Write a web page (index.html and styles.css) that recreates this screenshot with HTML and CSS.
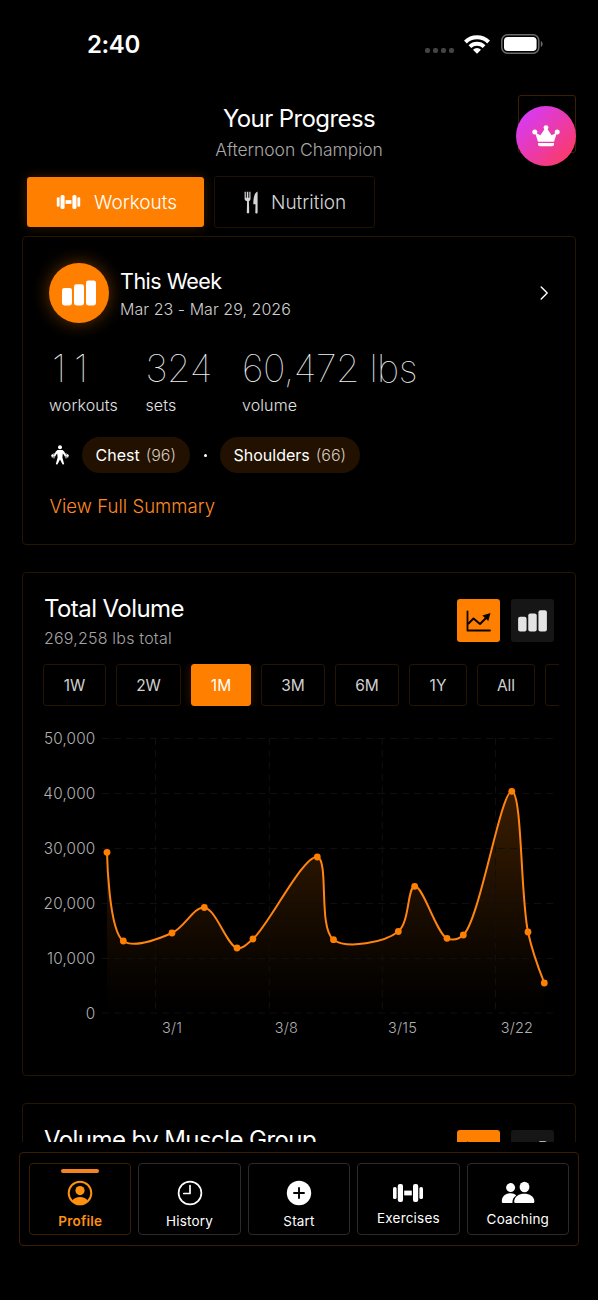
FILE: index.html
```html
<!DOCTYPE html>
<html lang='en'>
<head>
    <meta charset='UTF-8'>
    <title>Your Progress</title>

    <link rel="stylesheet" href="styles.css">
</head>
<body>

<!-- shared icons -->
<svg class='sprite' aria-hidden='true'>
    <symbol id='dumbbell' viewBox='0 0 32 20'>
        <rect x='1' y='4' width='3.6' height='12' rx='1.6'/>
        <rect x='5.8' y='1' width='5.2' height='18' rx='2'/>
        <rect x='12.2' y='7.6' width='7.6' height='4.8'/>
        <rect x='21' y='1' width='5.2' height='18' rx='2'/>
        <rect x='27.4' y='4' width='3.6' height='12' rx='1.6'/>
    </symbol>
    <symbol id='bars' viewBox='0 0 34 26'>
        <rect x='0' y='8' width='10' height='17.5' rx='2.4'/>
        <rect x='12' y='4.2' width='10' height='21.3' rx='2.4'/>
        <rect x='24' y='0.4' width='10' height='25.1' rx='2.4'/>
    </symbol>
    <symbol id='trend' viewBox='0 0 26 24'>
        <path d='M1.500 2.500v19h22.500' fill='none' stroke='currentColor' stroke-width='1.800' stroke-linecap='round' stroke-linejoin='round'/>
        <path d='M2 15l5.500-5.500 6.500 5.500 7-7' fill='none' stroke='currentColor' stroke-width='2' stroke-linejoin='round'/>
        <path d='M24.500 4l-2.200 8-6-5.600z'/>
    </symbol>
</svg>

<div class='screen'>
    <div class='status-bar'>
        <span class='clock'>2:40</span>
        <div class='status-icons'>
            <span class='signal'><i></i><i></i><i></i><i></i></span>
            <svg class='wifi' viewBox='0 0 26 19'>
                <g fill='none' stroke='currentColor' stroke-width='3.900'>
                    <path d='M1.400 7a16.600 16.600 0 0 1 23.200 0'/>
                    <path d='M5.900 11.700a10.200 10.200 0 0 1 14.200 0'/>
                </g>
                <path d='M13 18.800l-4-4.100a5.800 5.800 0 0 1 8 0z'/>
            </svg>
            <svg class='battery' viewBox='0 0 42 20'>
                <rect x='0.8' y='0.8' width='37' height='18.400' rx='5.600' fill='none' stroke='#6a6a6a' stroke-width='1.500'/>
                <rect x='3' y='3' width='32.600' height='14' rx='3.800'/>
                <path d='M39.800 7c2.400 1 2.400 5 0 6z' fill='#6a6a6a'/>
            </svg>
        </div>
    </div>

    <main class='content'>
        <header class='header'>
            <h1>Your Progress</h1>
            <p>Afternoon Champion</p>
            <div class='premium'>
                <a href='#' class='crown'>
                    <svg viewBox='0 0 28 22'>
                        <circle cx='14' cy='2.600' r='2.400'/>
                        <circle cx='2.800' cy='7' r='2.500'/>
                        <circle cx='25.200' cy='7' r='2.500'/>
                        <path d='M3 7.500l5.400 2.700L12.600 4h2.800l4.200 6.200L25 7.500l-3 9.300H6z'/>
                        <path d='M6 18h16v1.300c0 1.200-.8 2-2 2H8c-1.200 0-2-.8-2-2z'/>
                    </svg>
                </a>
            </div>
        </header>

        <nav class='tabs'>
            <a href='#' class='tab tab-active'>
                <svg class='tab-dumbbell'><use href='#dumbbell'/></svg>
                <span>Workouts</span>
            </a>
            <a href='#' class='tab tab-nutrition'>
                <svg class='tab-fork' viewBox='0 0 15 23'>
                    <path d='M.6.8h1.2v6h1V.8h1.500v6h1V.8h1.200v7c0 1.300-.6 2-1.600 2.400l.3 11c0 1.600-2.400 1.600-2.400 0l.3-11C1.200 9.800.6 9.100.6 7.800z'/>
                    <path d='M13.600.6v20.800c0 1.400-2.300 1.400-2.300 0l.2-8.200H9.300C9.200 7 10.400 1.600 13.600.6z'/>
                </svg>
                <span>Nutrition</span>
            </a>
        </nav>

        <section class='card week'>
            <div class='week-head'>
                <div class='week-badge'><svg><use href='#bars'/></svg></div>
                <div class='week-title'>
                    <h2>This Week</h2>
                    <p>Mar 23 - Mar 29, 2026</p>
                </div>
                <svg class='chevron' viewBox='0 0 9 14'><path d='M1.200 1l6 6-6 6' fill='none' stroke='currentColor' stroke-width='1.400' stroke-linecap='round' stroke-linejoin='round'/></svg>
            </div>

            <div class='stats'>
                <div class='stat stat-count'><strong>11</strong><span>workouts</span></div>
                <div class='stat'><strong>324</strong><span>sets</span></div>
                <div class='stat'><strong>60,472 lbs</strong><span>volume</span></div>
            </div>

            <div class='muscles'>
                <svg class='lifter' viewBox='0 0 18 20'>
                    <circle cx='9' cy='2.300' r='2'/>
                    <path d='M6.500 5h5l1.700 1.600 2 3.800-1.100.8-2.300-2.800-.4 4.200 1.800 6.700-1.600.3L9 14.400l-2.600 5.200-1.600-.3 1.800-6.700-.4-4.200-2.300 2.800-1.100-.8 2-3.800z'/>
                    <path d='M0 10.800h4.600M13.400 10.800H18M1.300 9v3.600M3 8.200v5.200M15 8.200v5.200M16.700 9v3.600' fill='none' stroke='currentColor' stroke-width='1'/>
                </svg>
                <span class='chip'>Chest <em>(96)</em></span>
                <span class='dot'></span>
                <span class='chip'>Shoulders <em>(66)</em></span>
            </div>

            <a href='#' class='summary-link'>View Full Summary</a>
        </section>

        <section class='card volume'>
            <div class='card-head'>
                <div>
                    <h2>Total Volume</h2>
                    <p>269,258 lbs total</p>
                </div>
                <div class='toggles'>
                    <a href='#' class='toggle toggle-on'><svg class='icon-trend'><use href='#trend'/></svg></a>
                    <a href='#' class='toggle'><svg class='icon-bars'><use href='#bars'/></svg></a>
                </div>
            </div>

            <div class='ranges'>
                <a href='#' class='range w63'>1W</a>
                <a href='#' class='range w65'>2W</a>
                <a href='#' class='range range-on'>1M</a>
                <a href='#' class='range w64'>3M</a>
                <a href='#' class='range w64'>6M</a>
                <a href='#' class='range'>1Y</a>
                <a href='#' class='range'>All</a>
                <a href='#' class='range w64'></a>
            </div>

            <svg class='chart' viewBox='0 0 512 312'>
                <defs>
                    <linearGradient id='area' gradientUnits='userSpaceOnUse' x1='0' y1='63' x2='0' y2='285'>
                        <stop offset='0' stop-color='#ff7f00' stop-opacity='.23'/>
                        <stop offset='.8' stop-color='#ff7f00' stop-opacity='.035'/>
                        <stop offset='1' stop-color='#ff7f00' stop-opacity='0'/>
                    </linearGradient>
                </defs>

                <path class='area' d='M63 124C63 124 64.4 202.5 79.3 213C90.3 220.8 114.1 211.1 128 205C140.7 199.4 150 178.3 160.3 179.5C171.900 180.800 183.300 218.100 193 220C198.800 221.100 202.600 216.500 209 211C224.300 197.900 260 125.800 273.300 129C285.300 131.900 273.900 200.400 289.500 211.700C303.200 221.600 340.900 214.200 354.300 203.500C365.800 194.300 363.300 159.100 370.700 158.300C379 157.400 392.500 205.700 403 210.300C408.500 212.700 413.900 211.800 419.300 207C435.600 192.600 457 62.100 467.800 63.300C478.200 64.400 476.500 169 484 204C488.600 225.500 500.300 255 500.300 255V285H63z'/>

                <path class='grid' d='M58 10.500H512M58 65.500H512M58 120.500H512M58 175.500H512M58 230.500H512M58 285H512M111.500 10V285M225.300 10V285M338.300 10V285M451.500 10V285'/>

                <path class='line' d='M63 124C63 124 64.4 202.5 79.3 213C90.3 220.8 114.1 211.1 128 205C140.7 199.4 150 178.3 160.3 179.5C171.900 180.800 183.300 218.100 193 220C198.800 221.100 202.600 216.500 209 211C224.300 197.900 260 125.800 273.300 129C285.300 131.900 273.900 200.400 289.500 211.700C303.200 221.600 340.900 214.200 354.300 203.500C365.800 194.300 363.300 159.100 370.700 158.300C379 157.400 392.500 205.700 403 210.300C408.500 212.700 413.900 211.800 419.300 207C435.600 192.600 457 62.100 467.800 63.300C478.200 64.400 476.500 169 484 204C488.600 225.500 500.300 255 500.300 255'/>

                <g class='points'>
                    <circle cx='63' cy='124.300' r='3.400'/>
                    <circle cx='79.300' cy='213' r='3.400'/>
                    <circle cx='128' cy='205' r='3.400'/>
                    <circle cx='160.300' cy='179.500' r='3.400'/>
                    <circle cx='193' cy='220' r='3.400'/>
                    <circle cx='209' cy='211' r='3.400'/>
                    <circle cx='273.300' cy='129' r='3.400'/>
                    <circle cx='289.500' cy='211.700' r='3.400'/>
                    <circle cx='354.300' cy='203.500' r='3.400'/>
                    <circle cx='370.700' cy='158.300' r='3.400'/>
                    <circle cx='403' cy='210.300' r='3.400'/>
                    <circle cx='419.300' cy='207' r='3.400'/>
                    <circle cx='467.800' cy='63.300' r='3.400'/>
                    <circle cx='484' cy='204' r='3.400'/>
                    <circle cx='500.300' cy='255' r='3.400'/>
                </g>

                <g class='axis axis-y'>
                    <text x='51.500' y='15.500'>50,000</text>
                    <text x='51.500' y='70.500'>40,000</text>
                    <text x='51.500' y='125.500'>30,000</text>
                    <text x='51.500' y='180.500'>20,000</text>
                    <text x='51.500' y='235.500'>10,000</text>
                    <text x='51.500' y='290.500'>0</text>
                </g>
                <g class='axis axis-x'>
                    <text x='128' y='304.500'>3/1</text>
                    <text x='242.500' y='304.500'>3/8</text>
                    <text x='358.500' y='304.500'>3/15</text>
                    <text x='473' y='304.500'>3/22</text>
                </g>
            </svg>
        </section>

        <section class='card muscle-volume'>
            <div class='card-head'>
                <div>
                    <h2>Volume by Muscle Group</h2>
                </div>
                <div class='toggles'>
                    <a href='#' class='toggle toggle-on'><svg class='icon-trend'><use href='#trend'/></svg></a>
                    <a href='#' class='toggle'><svg class='icon-bars'><use href='#bars'/></svg></a>
                </div>
            </div>
        </section>
    </main>

    <nav class='bottom-nav'>
        <a href='#' class='nav-item nav-active'>
            <svg class='nav-icon' viewBox='0 0 26 26'>
                <circle cx='13' cy='13' r='11.300' fill='none' stroke='currentColor' stroke-width='2'/>
                <circle cx='13' cy='10.600' r='4.600'/>
                <path d='M5.300 20.500c2.700-4.700 12.700-4.700 15.400 0-4 4.700-11.400 4.700-15.400 0z'/>
            </svg>
            <span>Profile</span>
        </a>
        <a href='#' class='nav-item'>
            <svg class='nav-icon' viewBox='0 0 26 26'>
                <g fill='none' stroke='currentColor' stroke-width='1.700' stroke-linecap='round' stroke-linejoin='round'>
                    <circle cx='13' cy='13' r='11.400'/>
                    <path d='M13 5.500v8H6.800'/>
                </g>
            </svg>
            <span>History</span>
        </a>
        <a href='#' class='nav-item'>
            <svg class='nav-icon' viewBox='0 0 26 26'>
                <circle cx='13' cy='13' r='12.200'/>
                <path d='M13 8v10M8 13h10' stroke='#000' stroke-width='1.900' stroke-linecap='round'/>
            </svg>
            <span>Start</span>
        </a>
        <a href='#' class='nav-item'>
            <svg class='nav-dumbbell'><use href='#dumbbell'/></svg>
            <span>Exercises</span>
        </a>
        <a href='#' class='nav-item'>
            <svg class='nav-people' viewBox='0 0 34 23'>
                <circle cx='9.600' cy='6.600' r='4.500'/>
                <path d='M.8 20.500c0-9 11-10 14.400-6-2.800 1.800-3.800 4-3.800 7.500H2c-.8 0-1.200-.6-1.200-1.500z'/>
                <ellipse cx='23.500' cy='6' rx='4.900' ry='5.300'/>
                <path d='M13.200 20.500c0-10.500 20.200-10.500 20.200 0 0 .9-.4 1.500-1.200 1.500H14.400c-.8 0-1.200-.6-1.200-1.500z'/>
            </svg>
            <span>Coaching</span>
        </a>
    </nav>
</div>

</body>
</html>
```

FILE: styles.css
```css
* {
    box-sizing: border-box;
}

body {
    margin: 0;
    background: #000;
    color: #fff;
    font-family: Inter, "Liberation Sans", sans-serif;
    font-weight: 300;
}

a {
    color: inherit;
    text-decoration: none;
}

h1, h2, p {
    margin: 0;
    font-weight: 300;
    white-space: nowrap;
}

svg {
    display: block;
    fill: currentColor;
}

.sprite {
    display: none;
}

.screen {
    display: flex;
    flex-direction: column;
    width: 598px;
    height: 1300px;
    overflow: hidden;
}

/* Status bar */
.status-bar {
    display: flex;
    justify-content: space-between;
    align-items: center;
    height: 88px;
    padding: 0 55px 0 87px;
}

.clock {
    margin-top: 1px;
    font-size: 24px;
    font-weight: 600;
    letter-spacing: -0.4px;
}

.status-icons {
    display: flex;
    align-items: center;
}

.signal {
    display: flex;
    gap: 3px;
    margin: 13px 10px 0 0;
}

.signal i {
    width: 5px;
    height: 5px;
    border-radius: 2px;
    background: #444;
}

.wifi {
    width: 26px;
    height: 19px;
    margin-right: 11px;
}

.battery {
    width: 42px;
    height: 20px;
}

.content {
    height: 1054px;
    padding: 0 22px;
    overflow: hidden;
}

.header {
    position: relative;
    height: 88px;
    padding-top: 16px;
    text-align: center;
}

.header h1 {
    font-size: 24px;
    line-height: 30px;
    font-weight: 400;
    letter-spacing: -0.6px;
}

.header p {
    margin-top: 5px;
    font-size: 17.5px;
    line-height: 22px;
    letter-spacing: -0.05px;
    color: #a8a8a8;
}

.premium {
    position: absolute;
    top: 7px;
    right: 0;
    width: 58px;
    height: 58px;
    border: 1px solid #3a2000;
    border-radius: 3px;
}

.crown {
    position: absolute;
    top: 10px;
    right: -1px;
    display: flex;
    align-items: center;
    justify-content: center;
    width: 60px;
    height: 60px;
    border-radius: 50%;
    background: linear-gradient(135deg, #d63af9 10%, #ff3a5c 95%);
}

.crown svg {
    width: 28px;
    height: 22px;
}

.tabs {
    display: flex;
    gap: 10px;
    margin-bottom: 8px;
    padding-left: 5px;
}

.tab {
    display: flex;
    align-items: center;
    height: 52px;
    border: 1px solid #1f1203;
    border-radius: 3px;
    font-size: 19px;
    color: #d6d6d6;
}

.tab-active {
    width: 177px;
    height: 50px;
    margin-top: 1px;
    padding-left: 29px;
    border: 0;
    background: #ff7f00;
    box-shadow: 0 0 12px rgba(255, 127, 0, 0.22);
    color: #fff;
}

.tab-dumbbell {
    width: 25px;
    height: 16px;
    margin-right: 13px;
}

.tab-nutrition {
    width: 161px;
    padding-left: 29px;
}

.tab-fork {
    width: 15px;
    height: 23px;
    margin-right: 12px;
}

.card {
    border: 1px solid #261500;
    border-radius: 4px;
}

/* This week */
.week {
    height: 309px;
    margin-bottom: 27px;
    padding: 26px;
}

.week-head {
    display: flex;
    align-items: center;
}

.week-badge {
    display: flex;
    align-items: center;
    justify-content: center;
    width: 60px;
    height: 60px;
    margin-right: 11px;
    border-radius: 50%;
    background: #ff7f00;
    box-shadow: 0 0 18px rgba(255, 127, 0, 0.4);
}

.week-badge svg {
    width: 34px;
    height: 26px;
}

.week-title {
    flex: 1;
}

.week-title h2 {
    margin-top: 1px;
    font-size: 21.5px;
    line-height: 28px;
    font-weight: 400;
    letter-spacing: -0.5px;
}

.week-title p {
    margin-top: 3px;
    font-size: 16px;
    line-height: 22px;
    letter-spacing: 0.05px;
    color: #d0d0d0;
}

.chevron {
    width: 9px;
    height: 14px;
}

.stats {
    display: flex;
    margin-top: 21px;
}

.stat {
    min-width: 96.5px;
}

.stat strong {
    display: block;
    font-size: 38px;
    line-height: 48px;
    font-weight: 100;
    letter-spacing: -0.5px;
    color: #f0f0f0;
}

.stat-count strong {
    padding-left: 3px;
    letter-spacing: 8px;
}

.stat span {
    display: block;
    margin-top: 2px;
    font-size: 16px;
    line-height: 22px;
    letter-spacing: 0.1px;
    color: #e2e2e2;
}

.muscles {
    display: flex;
    align-items: center;
    margin-top: 21px;
}

.lifter {
    width: 18px;
    height: 20px;
    margin: 0 13px 0 2px;
}

.chip {
    height: 36px;
    padding: 0 14px 0 13.5px;
    border-radius: 18px;
    background: #221100;
    font-size: 16px;
    line-height: 36px;
    font-weight: 400;
}

.chip em {
    margin-left: 1.5px;
    font-style: normal;
    font-weight: 300;
    color: #d3c7bd;
}

.dot {
    width: 3px;
    height: 3px;
    margin: 0 13.5px;
    border-radius: 50%;
    background: #fff;
}

.summary-link {
    display: inline-block;
    margin-top: 21px;
    padding-left: 0.5px;
    font-size: 18.5px;
    line-height: 24px;
    letter-spacing: 0.05px;
    color: #ff8922;
}

/* Total volume */
.volume {
    height: 504px;
    margin-bottom: 27px;
    padding: 21px 21px 0;
}

.card-head {
    display: flex;
    justify-content: space-between;
    height: 48px;
    padding-top: 5px;
}

.card-head h2 {
    margin-top: -5px;
    font-size: 24px;
    line-height: 30px;
    font-weight: 400;
    letter-spacing: -0.57px;
}

.card-head p {
    margin-top: 3px;
    font-size: 16px;
    line-height: 22px;
    letter-spacing: 0.2px;
    color: #a4a4a4;
}

.toggles {
    display: flex;
    gap: 11px;
}

.toggle {
    display: flex;
    align-items: center;
    justify-content: center;
    width: 43px;
    height: 43px;
    border-radius: 3px;
    background: #161616;
    color: #e4e4e4;
}

.toggle-on {
    background: #ff7f00;
    color: #0a0400;
}

.icon-trend {
    width: 26px;
    height: 24px;
}

.icon-bars {
    width: 29px;
    height: 22px;
}

.ranges {
    display: flex;
    gap: 10px;
    margin: 22px -5px 0 -1px;
    overflow: hidden;
}

.range {
    flex: none;
    width: 58px;
    height: 42px;
    border: 1px solid #241402;
    border-radius: 3px;
    font-size: 15.5px;
    line-height: 41px;
    font-weight: 400;
    text-align: center;
    color: #d0d0d0;
}

.range-on {
    width: 60px;
    border-color: #ff7f00;
    background: #ff7f00;
    box-shadow: 0 0 12px rgba(255, 127, 0, 0.2);
    color: #fff;
}

.w63 {
    width: 63px;
}

.w64 {
    width: 64px;
}

.w65 {
    width: 65px;
}

.chart {
    width: 512px;
    height: 312px;
    margin-top: 22px;
}

.area {
    fill: url(#area);
}

.grid {
    fill: none;
    stroke: #0f0f0f;
    stroke-width: 1;
    stroke-dasharray: 7 5;
}

.line {
    fill: none;
    stroke: #ff8410;
    stroke-width: 2;
}

.points {
    fill: #ff7f00;
}

.axis {
    font-size: 15.3px;
    letter-spacing: 0.2px;
    fill: #b0b0b0;
}

.axis-y {
    text-anchor: end;
}

.axis-x {
    font-size: 14.5px;
    text-anchor: middle;
}

.muscle-volume {
    height: 300px;
    padding: 21px 21px 0;
}

/* Bottom nav */
.bottom-nav {
    display: flex;
    gap: 7px;
    width: 560px;
    height: 94px;
    margin: 10px 0 0 19px;
    padding: 10px 9px;
    border: 1px solid #3a1e00;
    border-radius: 4px;
}

.nav-item {
    position: relative;
    display: flex;
    flex: 1;
    flex-direction: column;
    align-items: center;
    padding-top: 16px;
    border: 1px solid #2a2a2a;
    border-radius: 4px;
    font-size: 13.5px;
    line-height: 18px;
    letter-spacing: 0.2px;
    color: #fff;
}

.nav-item span {
    margin-top: 6px;
    font-weight: 400;
}

.nav-active {
    border-color: #3a1e00;
    color: #ff9010;
}

.nav-active span {
    font-weight: 600;
}

.nav-active::before {
    content: "";
    position: absolute;
    top: 5px;
    width: 38px;
    height: 4px;
    border-radius: 2px;
    background: #f78320;
}

.nav-icon {
    width: 26px;
    height: 26px;
}

.nav-dumbbell {
    width: 32px;
    height: 20px;
    margin-top: 3px;
}

.nav-people {
    width: 34px;
    height: 23px;
    margin-top: 1px;
}
```
